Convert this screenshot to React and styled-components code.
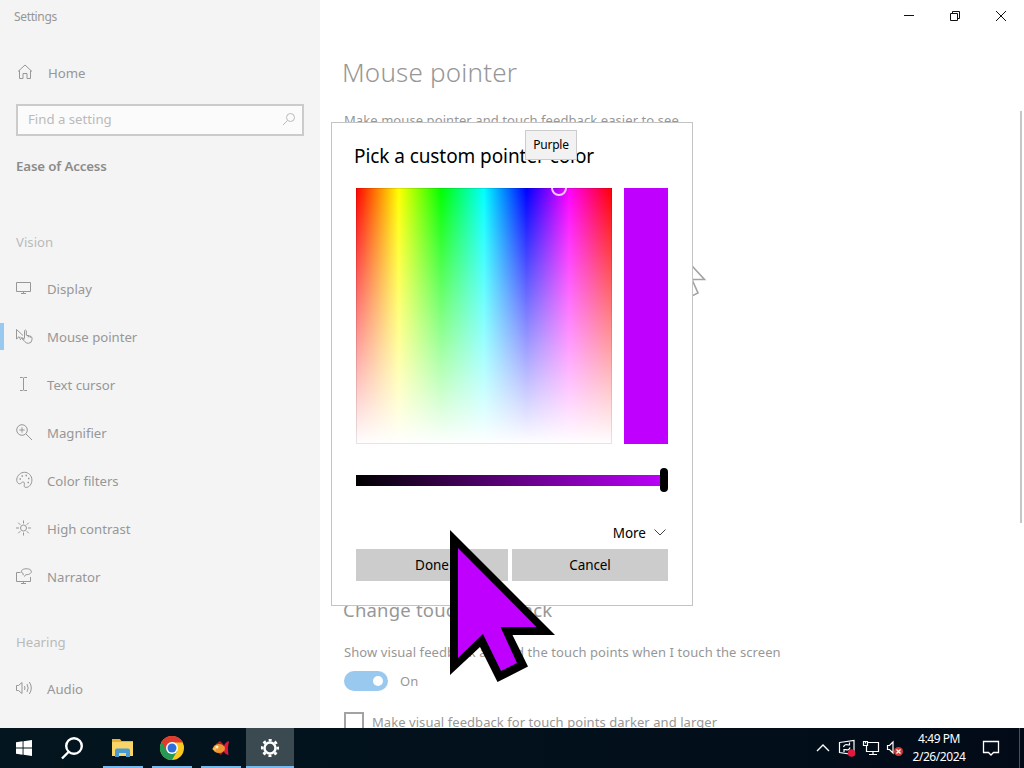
import React from 'react';
import styled, { createGlobalStyle, ThemeProvider } from 'styled-components';

const theme = {
  colors: {
    sidebar: '#f4f4f4',
    dim: '#979797',
    faint: '#bababa',
    accent: '#99c9ef',
    purple: '#bf00ff',
  },
};

const GlobalStyle = createGlobalStyle`
  * {
    box-sizing: border-box;
  }

  body {
    margin: 0;
    overflow: hidden;
    font-family: 'Noto Sans', 'Open Sans', sans-serif;
    font-size: 14px;
    line-height: 20px;
  }
`;

const Desktop = styled.div`
  position: relative;
  display: flex;
  flex-direction: column;
  width: 1024px;
  height: 768px;
  overflow: hidden;
  background: #fff;
`;

const SettingsWindow = styled.div`
  display: flex;
  height: 728px;
  overflow: hidden;
  color: ${({ theme }) => theme.colors.dim};
`;

const Text = styled.span`
  font-size: ${({ $size }) => $size || 14}px;
  font-weight: ${({ $weight }) => $weight || 400};
  letter-spacing: ${({ $track }) => $track || 0}px;
  white-space: nowrap;
`;

const Sidebar = styled.aside`
  display: flex;
  flex-direction: column;
  flex: none;
  width: 320px;
  background: ${({ theme }) => theme.colors.sidebar};
`;

const AppTitle = styled.div`
  height: 49px;
  padding: 6px 14px;
`;

const NavItem = styled.div`
  display: flex;
  align-items: center;
  gap: 14px;
  height: 48px;
  padding-left: 12px;
  border-left: 4px solid ${({ $active, theme }) => ($active ? theme.colors.accent : 'transparent')};
  border-image: ${({ $active, theme }) =>
    $active
      ? `linear-gradient(transparent 11px, ${theme.colors.accent} 11px, ${theme.colors.accent} 36px, transparent 36px) 1 / 0 0 0 4px`
      : 'none'};
  svg {
    flex: none;
    margin-top: -2px;
  }
`;

const SearchBox = styled.div`
  display: flex;
  align-items: center;
  justify-content: space-between;
  height: 32px;
  margin: 7px 16px 0;
  padding: 0 6px 2px 10px;
  border: 2px solid #cbcbcb;
  background: #fbfbfb;
  color: ${({ theme }) => theme.colors.faint};
`;

const Category = styled.div`
  padding: 20px 16px 0;
  height: 84px;
  color: #8b8b8b;
`;

const GroupTitle = styled.div`
  height: ${({ $height }) => $height}px;
  padding: ${({ $top }) => $top}px 16px 0;
  color: ${({ theme }) => theme.colors.faint};
`;

const Main = styled.main`
  display: flex;
  flex-direction: column;
  flex: 1;
`;

const TitleBar = styled.div`
  display: flex;
  justify-content: flex-end;
  height: 32px;
`;

const CaptionButton = styled.div`
  display: flex;
  align-items: center;
  justify-content: center;
  width: 46px;
  height: 32px;
  color: #111;
`;

const Content = styled.div`
  display: flex;
  flex: 1;
  justify-content: space-between;
`;

const Page = styled.div`
  display: flex;
  flex-direction: column;
  padding: 20px 0 0 24px;
`;

const PageTitle = styled.h1`
  height: 58px;
  margin: -1px 0 1px -2px;
  font-weight: 400;
  line-height: 40px;
`;

const Preview = styled.div`
  display: flex;
  height: 469px;
  padding: 123px 0 0 336px;
`;

const SectionTitle = styled.h2`
  height: 43px;
  margin: 0 0 0 -1px;
  font-weight: 400;
  line-height: 20px;
`;

const SettingRow = styled.div`
  display: flex;
  align-items: center;
  gap: ${({ $gap }) => $gap}px;
  margin-top: ${({ $top }) => $top || 0}px;
`;

const Toggle = styled.div`
  display: flex;
  align-items: center;
  justify-content: flex-end;
  width: 44px;
  height: 20px;
  padding-right: 5px;
  border-radius: 10px;
  background: ${({ theme }) => theme.colors.accent};
  &::after {
    content: '';
    width: 10px;
    height: 10px;
    border-radius: 50%;
    background: #fff;
  }
`;

const Checkbox = styled.div`
  width: 20px;
  height: 20px;
  border: 2px solid #a3a3a3;
`;

const Scrollbar = styled.div`
  width: 4px;
  height: 412px;
  margin-top: 79px;
  border-right: 2px solid transparent;
  background: #c6c6c6;
  background-clip: padding-box;
`;

const Dialog = styled.section`
  position: absolute;
  top: 122px;
  left: 331px;
  display: flex;
  flex-direction: column;
  width: 362px;
  height: 484px;
  padding: 22px 24px 24px;
  border: 1px solid #c4c4c4;
  background: #fff;
  color: #000;
`;

const DialogTitle = styled.h3`
  height: 43px;
  margin: 0 0 0 -2px;
  font-weight: 400;
  line-height: 22px;
`;

const Picker = styled.div`
  display: flex;
  gap: 12px;
`;

const Spectrum = styled.div`
  position: relative;
  width: 256px;
  height: 256px;
  overflow: hidden;
  background: linear-gradient(rgba(255, 255, 255, 0), #fff),
    linear-gradient(90deg, #f00, #ff0, #0f0, #0ff, #00f, #f0f, #f00);
  box-shadow: inset 0 0 0 1px rgba(0, 0, 0, 0.1);
`;

const Thumb = styled.div`
  position: absolute;
  top: -8px;
  left: 195px;
  width: 16px;
  height: 16px;
  border: 2px solid #f7c6ff;
  border-radius: 50%;
`;

const Swatch = styled.div`
  width: 44px;
  height: 256px;
  background: ${({ theme }) => theme.colors.purple};
`;

const Slider = styled.div`
  display: flex;
  align-items: center;
  justify-content: flex-end;
  height: 24px;
  margin-top: 24px;
  background: linear-gradient(90deg, #000, ${({ theme }) => theme.colors.purple}) 0 7px / 100% 11px no-repeat;
  &::after {
    content: '';
    width: 8px;
    height: 24px;
    border-radius: 4px;
    background: #000;
  }
`;

const More = styled.div`
  display: flex;
  align-items: center;
  justify-content: flex-end;
  gap: 8px;
  height: 20px;
  margin-top: 31px;
  padding-right: 2px;
  svg {
    margin-top: -2px;
    color: #444;
  }
`;

const Actions = styled.div`
  display: grid;
  grid-template-columns: 152px 156px;
  gap: 4px;
  margin-top: 6px;
`;

const Button = styled.button`
  height: 32px;
  padding: 0;
  border: 0;
  background: #ccc;
  color: #000;
  font-family: inherit;
  line-height: 32px;
`;

const Tooltip = styled.div`
  position: absolute;
  top: 130px;
  left: 525px;
  display: flex;
  align-items: center;
  justify-content: center;
  width: 52px;
  height: 30px;
  border: 1px solid #ccc;
  background: #f2f2f2;
`;

const Pointer = styled.svg`
  position: absolute;
  top: 528px;
  left: 448px;
`;

const Taskbar = styled.footer`
  display: flex;
  justify-content: space-between;
  height: 40px;
  background: linear-gradient(90deg, #03151e, #020f1b 70%, #020a18);
  color: #fff;
`;

const TaskGroup = styled.div`
  display: flex;
`;

const TaskItem = styled.div`
  display: flex;
  align-items: center;
  justify-content: center;
  width: ${({ $open }) => ($open ? 48 : 49)}px;
  margin-right: ${({ $open }) => ($open ? 1 : 0)}px;
  padding-right: ${({ $open }) => ($open ? 0 : 1)}px;
  background: ${({ $active }) => ($active ? '#3a4a50' : 'transparent')};
  border: solid transparent;
  border-width: 0 ${({ $active }) => ($active ? 0 : 4)}px;
  background-clip: padding-box;
  box-shadow: ${({ $open }) => ($open ? 'inset 0 -2px #76b9ed' : 'none')};

  &:nth-child(2) {
    margin-right: 1px;
  }
`;

const Tray = styled.div`
  display: flex;
  align-items: center;
`;

const TrayIcon = styled.div`
  display: flex;
  justify-content: center;
  width: 24px;
`;

const Clock = styled.div`
  display: flex;
  flex-direction: column;
  align-items: center;
  width: 64px;
  line-height: 18px;
`;

const ActionCenter = styled.div`
  display: flex;
  align-items: center;
  justify-content: center;
  width: 40px;
  height: 40px;
`;

const ShowDesktop = styled.div`
  width: 5px;
  height: 40px;
  margin-left: 8px;
  border-left: 1px solid #46515e;
`;

const Line = ({ size = 18, width = size, stroke = 1, children }) => (
  <svg
    width={width}
    height={size}
    viewBox={`0 0 ${width} ${size}`}
    fill="none"
    stroke="currentColor"
    strokeWidth={stroke}
  >
    {children}
  </svg>
);

const HomeIcon = () => (
  <Line>
    <path d="M2 8.5 9 2l7 6.5M3.5 7.5v8H7v-5h4v5h3.5v-8" />
  </Line>
);

const SearchIcon = () => (
  <Line size={14}>
    <circle cx="8.5" cy="5.5" r="4" />
    <path d="M5.6 8.4 1 13" />
  </Line>
);

const icons = {
  display: <path d="M.5 3.5h14v9H.5zM7.5 12.5v2M5 14.5h5" />,
  pointer: (
    <path d="M.5 2.5V12L3 9.7l1.7 3.2M.5 2.5l6.5 6M4.5 10l3 2.5M8.500 11.5V3.7q.9-1.4 1.8 0v4.500l4.300 1.100q1.400.4 1.400 1.900v1.500q-.4 3.600-3.600 3.600-2.300 0-3.700-1.800L5.700 11.300q.5-1.200 2.800.7M12.300 8v2.300M14.300 9v1.800" />
  ),
  cursor: <path d="M4 2.5h2.7l.8.6.8-.6H11M7.5 3v12M4 15.5h2.7l.8-.6.8.6H11" />,
  magnifier: (
    <>
      <circle cx="6" cy="7" r="5.3" />
      <path d="M10 11l6 6M3.3 7h5.4M6 4.3v5.4" />
    </>
  ),
  filters: (
    <>
      <path d="M.8 8C1.5 4 4.8 1.3 8.5 1.3c4 0 7.4 3.3 7.4 7.7 0 4-2.6 7.4-5.8 7.4-3.2 0-1.2-3-1.8-4.6-.6-1.4-1.9-.9-3 .2C3.3 14 .3 12 .8 8z" />
      <path d="M3.5 8H5M5.5 5H7M9.5 4.5H11M12 7.5h1.5M11.5 11.5H13" strokeWidth="1.5" />
    </>
  ),
  contrast: (
    <>
      <circle cx="7.5" cy="9" r="3" />
      <path d="M7.5 1.5v3M7.5 13.5v3M0 9h3M12 9h3M2.2 3.7l2.1 2.1M10.7 12.2l2.1 2.1M2.2 14.3l2.1-2.1M10.7 5.8l2.1-2.1" />
    </>
  ),
  narrator: (
    <path d="M4.5 5.5h-4v9h14V10M7.5 14.5v2M5 16.5h5M7.2 8.2V6.6C5.4 5.8 5 4.5 5.8 3.3 7 1.5 13 1 14.8 3.2c1.8 2.7-1.4 4.5-4.8 4.5L8 9.5" />
  ),
  audio: (
    <path d="M.5 6.5h2l3.500-3v11l-3.500-3h-2zM8.500 7q1 2 0 4M11 5q2.300 4 0 8M13.300 3q4 6 0 12" />
  ),
};

const visionItems = [
  { icon: 'display', label: 'Display' },
  { icon: 'pointer', label: 'Mouse pointer', active: true },
  { icon: 'cursor', label: 'Text cursor' },
  { icon: 'magnifier', label: 'Magnifier' },
  { icon: 'filters', label: 'Color filters' },
  { icon: 'contrast', label: 'High contrast' },
  { icon: 'narrator', label: 'Narrator' },
];

const SettingsNavItem = ({ icon, label, active }) => (
  <NavItem $active={active}>
    <Line width={17}>{icons[icon]}</Line>
    <Text $size={13.2} $track={-0.02}>{label}</Text>
  </NavItem>
);

const SettingsSidebar = () => (
  <Sidebar>
    <AppTitle>
      <Text $size={12} $track={-0.35}>Settings</Text>
    </AppTitle>
    <NavItem>
      <HomeIcon />
      <Text $size={13.2}>Home</Text>
    </NavItem>
    <SearchBox>
      <Text $size={13.2}>Find a setting</Text>
      <SearchIcon />
    </SearchBox>
    <Category>
      <Text $size={13.3} $weight={600} $track={-0.15}>Ease of Access</Text>
    </Category>
    <GroupTitle $top={12} $height={45}>
      <Text $size={13.2}>Vision</Text>
    </GroupTitle>
    {visionItems.map((item) => (
      <SettingsNavItem key={item.label} {...item} />
    ))}
    <GroupTitle $top={31} $height={64}>
      <Text $size={13.2}>Hearing</Text>
    </GroupTitle>
    <SettingsNavItem icon="audio" label="Audio" />
  </Sidebar>
);

const SettingsPage = () => (
  <Main>
    <TitleBar>
      <CaptionButton>
        <Line size={10}><path d="M0 4.5h10" /></Line>
      </CaptionButton>
      <CaptionButton>
        <Line size={10}><path d="M.5 2.5h7v7h-7zM2.5 2.5v-2h7v7h-2" /></Line>
      </CaptionButton>
      <CaptionButton>
        <Line size={10}><path d="M0 0l10 10M10 0 0 10" /></Line>
      </CaptionButton>
    </TitleBar>
    <Content>
      <Page>
        <PageTitle>
          <Text $size={26} $weight={300} $track={0.2}>Mouse pointer</Text>
        </PageTitle>
        <SettingRow $gap={0}>
          <Text $size={13} $track={0.08}>Make mouse pointer and touch feedback easier to see</Text>
        </SettingRow>
        <Preview>
          <Line size={50}>
            <path d="M1 1v37l6-6 5 11 6-3-6-13.500h12.500z" stroke="#a3a3a3" strokeWidth="1.6" />
          </Line>
        </Preview>
        <SectionTitle>
          <Text $size={18.5} $track={0.2}>Change touch feedback</Text>
        </SectionTitle>
        <SettingRow $gap={0}>
          <Text $size={13} $track={0.08}>Show visual feedback around the touch points when I touch the screen</Text>
        </SettingRow>
        <SettingRow $gap={12} $top={9}>
          <Toggle />
          <Text $size={13}>On</Text>
        </SettingRow>
        <SettingRow $gap={8} $top={21}>
          <Checkbox />
          <Text $size={13} $track={0.06}>Make visual feedback for touch points darker and larger</Text>
        </SettingRow>
      </Page>
      <Scrollbar />
    </Content>
  </Main>
);

const ColorDialog = () => (
  <Dialog>
    <DialogTitle>
      <Text $size={19} $track={-0.08}>Pick a custom pointer color</Text>
    </DialogTitle>
    <Picker>
      <Spectrum>
        <Thumb />
      </Spectrum>
      <Swatch />
    </Picker>
    <Slider />
    <More>
      <Text $size={13.5}>More</Text>
      <Line size={7} width={12}><path d="M.5.5 6 6 11.5.5" /></Line>
    </More>
    <Actions>
      <Button><Text $size={13.5} $track={-0.05}>Done</Text></Button>
      <Button><Text $size={13.5} $track={-0.1}>Cancel</Text></Button>
    </Actions>
  </Dialog>
);

const LargePointer = () => (
  <Pointer width="112" height="158" viewBox="448 528 112 158">
    <path d="M450 530l105 105h-42.500l15.500 31.500-30.500 15.500L480 647l-30 28z" fill="#000" />
    <path d="M458 548l78.500 79h-36l16.500 36-16 8-18-37-25 24z" fill="#bf00ff" />
  </Pointer>
);

const WindowsLogo = () => (
  <svg width="16" height="16" viewBox="0 0 16 16" fill="#fff">
    <path d="M0 2.300 6.600 1.300v6.300H0zM7.500 1.200 16 0v7.600H7.500zM0 8.500h6.600v6.300L0 13.800zM7.500 8.500H16V16l-8.500-1.200z" />
  </svg>
);

const FolderIcon = () => (
  <svg width="22" height="20" viewBox="0 0 22 20">
    <path d="M0 1h8l1.5 2H21v15H0z" fill="#e8ae35" />
    <path d="M0 4h21v14H0z" fill="#f9d468" />
    <path d="M3 19v-6.5q0-2 2-2h11q2 0 2 2V19h-4v-4H7v4z" fill="#4a9bd0" />
  </svg>
);

const ChromeIcon = () => (
  <svg width="24" height="24" viewBox="0 0 24 24">
    <circle cx="12" cy="12" r="12" fill="#fbc91d" />
    <path d="M12 12 1.6 6A12 12 0 0 0 12 24l5.2-9z" fill="#239b54" />
    <path d="M12 6.5h10.7A12 12 0 0 0 1.6 6l5.2 9z" fill="#df3b30" />
    <circle cx="12" cy="12" r="6" fill="#fff" />
    <circle cx="12" cy="12" r="4.5" fill="#2d70dc" />
  </svg>
);

const FishIcon = () => (
  <svg width="18" height="17" viewBox="0 0 18 17">
    <path d="M4 4 8 1l4 4zM5 12l4 3 2-3z" fill="#b51e2c" />
    <path d="M11 8q2-6 6-7-2 7-.5 14-5-1-5.5-7z" fill="#df183e" />
    <ellipse cx="7" cy="8.5" rx="6" ry="4.5" fill="#ed9830" />
    <path d="M0 9l4-3v5z" fill="#f9bc56" />
    <circle cx="5" cy="7" r="1.5" fill="#fff2cb" />
  </svg>
);

const GearIcon = () => (
  <svg width="20" height="20" viewBox="0 0 20 20" fill="none" stroke="#fff">
    <circle cx="10" cy="10" r="5.5" strokeWidth="2.5" />
    <circle cx="10" cy="10" r="7.8" strokeWidth="2.5" strokeDasharray="3.06 3.06" strokeDashoffset="1.53" />
  </svg>
);

const WindowsTaskbar = () => (
  <Taskbar>
    <TaskGroup>
      <TaskItem><WindowsLogo /></TaskItem>
      <TaskItem>
        <Line size={24} stroke={2.4}>
          <circle cx="13" cy="10" r="7.8" />
          <path d="M7.5 16 1 22.5" />
        </Line>
      </TaskItem>
      <TaskItem $open><FolderIcon /></TaskItem>
      <TaskItem $open><ChromeIcon /></TaskItem>
      <TaskItem $open><FishIcon /></TaskItem>
      <TaskItem $open $active><GearIcon /></TaskItem>
    </TaskGroup>
    <Tray>
      <TrayIcon>
        <Line size={8} width={14} stroke={1.4}><path d="M1 7l6-6 6 6" /></Line>
      </TrayIcon>
      <TrayIcon>
        <Line stroke={1.2}>
          <path d="M1.5 3.5 16 1.5v14l-14.500-2zM5.500 8q1-3.500 5.500-2M11.500 3.500V6H9M12 8.500q-1 3.500-5.500 2M6 13v-2.500h2.500" />
          <circle cx="13.5" cy="14" r="3.8" fill="#e0193d" stroke="none" />
        </Line>
      </TrayIcon>
      <TrayIcon>
        <Line stroke={1.2}>
          <path d="M5.5 3.5h11v9h-12V7M11 12.5v3M7 15.5h8M1.5 2.5h4v4h-4zM3.5 2.5v2" />
        </Line>
      </TrayIcon>
      <TrayIcon>
        <Line stroke={1.2}>
          <path d="M1.5 6.5h2L7 3v11l-3.500-3.500h-2z" />
          <circle cx="12.5" cy="12.5" r="4.5" fill="#d33a36" stroke="none" />
          <path d="M10.5 10.5l4 4M14.5 10.5l-4 4" />
        </Line>
      </TrayIcon>
      <Clock>
        <Text $size={12} $track={-0.45}>4:49 PM</Text>
        <Text $size={12} $track={-0.45}>2/26/2024</Text>
      </Clock>
      <ActionCenter>
        <Line stroke={1.3}><path d="M1.5 2.5h15v11h-5L9 16l-2.500-2.500h-5z" /></Line>
      </ActionCenter>
      <ShowDesktop />
    </Tray>
  </Taskbar>
);

const App = () => {
  return (
    <ThemeProvider theme={theme}>
      <GlobalStyle />
      <Desktop>
        <SettingsWindow>
          <SettingsSidebar />
          <SettingsPage />
        </SettingsWindow>
        <WindowsTaskbar />
        <ColorDialog />
        <Tooltip>
          <Text $size={12} $track={-0.2}>Purple</Text>
        </Tooltip>
        <LargePointer />
      </Desktop>
    </ThemeProvider>
  );
};

export default App;
